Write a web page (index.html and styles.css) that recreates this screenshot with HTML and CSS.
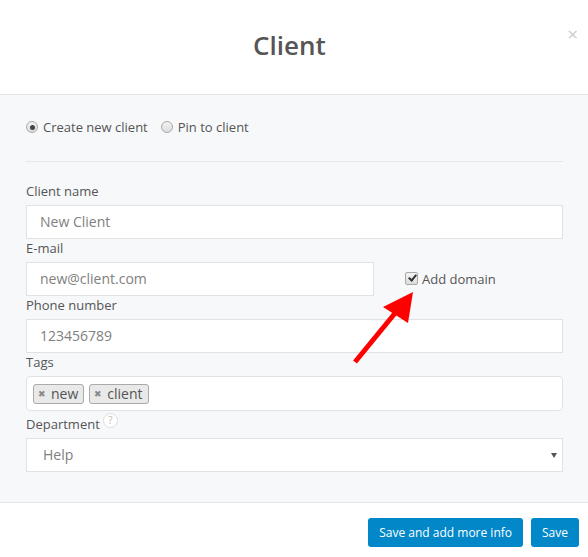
FILE: index.html
```html
<!DOCTYPE html>
<html>
<head>
<meta charset="utf-8">
<link rel="stylesheet" href="styles.css">
</head>
<body>
<div class="modal">
  <div class="header">
    <h1 class="title">Client</h1>
    <span class="close">×</span>
  </div>
  <div class="body">
    <div class="radios">
      <label class="radio"><input type="radio" name="mode" checked> Create new client</label>
      <label class="radio"><input type="radio" name="mode"> Pin to client</label>
    </div>
    <div class="sep"></div>
    <div class="fields">
      <label class="lbl">Client name</label>
      <div class="input">New Client</div>
      <label class="lbl">E-mail</label>
      <div class="email-row">
        <div class="input email">new@client.com</div>
        <label class="check"><input type="checkbox" checked> Add domain</label>
      </div>
      <label class="lbl">Phone number</label>
      <div class="input">123456789</div>
      <label class="lbl">Tags</label>
      <div class="tags">
        <span class="tag"><span class="x">✖</span>new</span>
        <span class="tag"><span class="x">✖</span>client</span>
      </div>
      <label class="lbl dept">Department <span class="help">?</span></label>
      <div class="input select">Help<span class="caret"></span></div>
    </div>
  </div>
  <div class="footer">
    <button class="btn">Save and add more info</button>
    <button class="btn">Save</button>
  </div>
  <svg class="arrow" width="588" height="557" viewBox="0 0 588 557">
    <line x1="355" y1="362" x2="396" y2="312" stroke="#ff0000" stroke-width="5"/>
    <polygon points="413,292 383,307 408,323" fill="#ff0000"/>
  </svg>
</div>
</body>
</html>
```
FILE: styles.css
```css
* { box-sizing: border-box; }
html, body { margin: 0; padding: 0; background: #fff; }
body { font-family: "Open Sans", "Liberation Sans", sans-serif; color: #555; }
.modal { position: relative; width: 588px; height: 557px; overflow: hidden; }
.header {
  height: 95px;
  border-bottom: 1px solid #e5e5e5;
  display: flex; align-items: center; justify-content: center;
  background: #fff;
  padding-right: 9px;
}
.title { margin: 0; font-size: 26px; font-weight: 600; color: #555; padding-bottom: 4px; }
.close { position: absolute; right: 10px; top: 22px; font-size: 19px; color: #ccc; line-height: 24px; }
.body { background: #f7f8fa; padding: 22px 25px 30px 26px; }
.radios { display: flex; gap: 13px; font-size: 13px; line-height: 20px; height: 20px; color: #555; }
.radio { display: flex; align-items: center; }
.radio input {
  appearance: none; -webkit-appearance: none;
  margin: 0 5px 0 0; width: 12px; height: 12px; border-radius: 50%;
  border: 1px solid #a9a9a9;
  background: linear-gradient(#f4f4f4, #dcdcdc);
  position: relative;
}
.radio input:checked::after {
  content: ""; position: absolute; left: 2.5px; top: 2.5px; width: 5px; height: 5px;
  border-radius: 50%; background: #444;
}
.sep { height: 1px; background: #e6e7e9; margin-top: 24px; }
.fields { margin-top: 20px; display: flex; flex-direction: column; }
.lbl { font-size: 13px; line-height: 18px; margin-bottom: 5px; color: #555; display: flex; align-items: center; }
.input {
  height: 34px; background: #fff; border: 1px solid #e1e2e4;
  padding: 0 13px; font-size: 14px; line-height: 32px; color: #808080;
}
.email-row { display: flex; align-items: center; }
.email { width: 348px; }
.check { display: flex; align-items: center; margin-left: 31px; font-size: 13px; color: #555; }
.check input {
  appearance: none; -webkit-appearance: none;
  margin: -2px 4px 0 0; width: 13px; height: 13px; border-radius: 2px;
  border: 1px solid #a9a9a9; background: linear-gradient(#f4f4f4, #dcdcdc);
  position: relative;
}
.check input:checked::after {
  content: ""; position: absolute; left: 3.5px; top: 0.5px; width: 3px; height: 6px;
  border: solid #333; border-width: 0 2px 2px 0; transform: rotate(40deg);
}
.tags {
  height: 35px; background: #fff; border: 1px solid #e1e2e4; border-radius: 4px;
  display: flex; align-items: center; gap: 5px; padding: 0 6px; margin-bottom: 0;
}
.tag {
  display: inline-flex; align-items: center; height: 20px;
  border: 1px solid #aaa; border-radius: 3px; background: #e9e9e9;
  padding: 0 5px 0 4px; font-size: 14px; color: #555; line-height: 18px;
}
.tag .x { font-size: 9px; color: #888; margin-right: 5px; }
.dept { margin-top: 4px; }
.help {
  display: inline-flex; align-items: center; justify-content: center;
  width: 15px; height: 15px; border: 1px solid #ddd; border-radius: 50%;
  font-size: 10px; color: #bbb; background: #fff; margin-left: 3px; margin-top: -8px;
}
.select { position: relative; padding-left: 16px; }
.caret {
  position: absolute; right: 5px; top: 14px;
  border-left: 3px solid transparent; border-right: 3px solid transparent; border-top: 5px solid #555;
}
.footer {
  border-top: 1px solid #e5e5e5; background: #fff;
  display: flex; justify-content: flex-end; gap: 8px; padding: 15px 9px 0 0;
}
.btn {
  height: 29px; border: none; border-radius: 3px; background: #0288c9; color: #fff;
  font-family: "Open Sans", "Liberation Sans", sans-serif; font-size: 12px; padding: 0 11px;
}
.arrow { position: absolute; left: 0; top: 0; pointer-events: none; }
```
